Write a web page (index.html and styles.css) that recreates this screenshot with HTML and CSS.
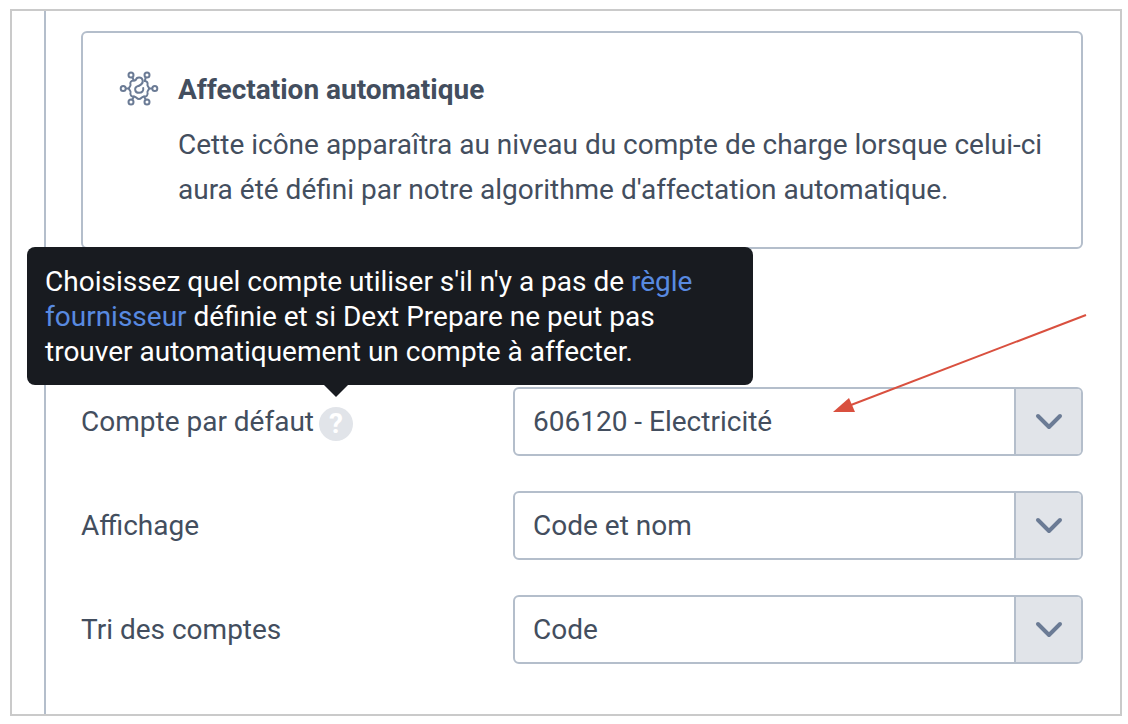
FILE: index.html
```html
<!DOCTYPE html>
<html lang="fr">
<head>
    <meta charset="UTF-8">
    <meta name="viewport" content="width=device-width, initial-scale=1.0">
    <title>Compte par défaut</title>
    <link rel="stylesheet" href="styles.css">
</head>
<body>
    <div class="frame">
        <main class="panel">
            <section class="card">
                <svg class="card-icon" viewBox="0 0 40 36" aria-hidden="true">
                    <circle cx="12" cy="4" r="2.5"/>
                    <circle cx="28" cy="4" r="2.5"/>
                    <circle cx="4.2" cy="17.5" r="2.5"/>
                    <circle cx="35.8" cy="17.5" r="2.5"/>
                    <circle cx="12" cy="31" r="2.5"/>
                    <circle cx="28" cy="31" r="2.5"/>
                    <path d="M7 17.5H10M30 17.5H33M13.3 6.5L15 9.5M13.3 28.5L15 25.5M26.7 28.5L25 25.5M26.7 6.5L25.8 10"/>
                    <path d="M19.5 15C22 14 24 12 23.7 9.5C23 5.5 17.5 5.5 16.8 9C16 10 15.5 9.5 14.5 9.5C12 9.5 10.8 11.5 11.5 13.5C12 15.5 10 15.5 10 17.5C10 19.5 12 19.5 11.5 21.5C10.8 24 12.5 26 15 25.5C17.5 25.5 17.5 28 20 28C22.5 28 22.5 25.5 25 25.5C27.5 26 29.2 24 28.5 21.5C28 19.5 30 19.5 30 17.5C30 15.5 28 15.5 28.5 13.5C29 11.5 28 10.2 25.8 10"/>
                    <path d="M19.5 15C14.5 16 15.5 21.8 20 21.8C23 21.8 24.8 20 24.2 17"/>
                </svg>
                <div>
                    <h2>Affectation automatique</h2>
                    <p>Cette icône apparaîtra au niveau du compte de charge lorsque celui-ci aura été défini par notre algorithme d'affectation automatique.</p>
                </div>
            </section>

            <form class="settings">
                <div class="row">
                    <div class="label">
                        <label for="compte">Compte par défaut</label>
                        <div class="help">
                            <button type="button" class="help-btn" aria-label="Aide" aria-describedby="aide">?</button>
                            <div class="tooltip" id="aide" role="tooltip">Choisissez quel compte utiliser s'il n'y a pas de <a href="#">règle fournisseur</a> définie et si Dext Prepare ne peut pas trouver automatiquement un compte à affecter.</div>
                        </div>
                    </div>
                    <div class="select">
                        <select id="compte">
                            <option>606120 - Electricité</option>
                        </select>
                        <span class="toggle"><svg viewBox="0 0 28 18"><path d="M3 3L14 14L25 3"/></svg></span>
                        <svg class="arrow" viewBox="0 0 254 100" aria-hidden="true">
                            <path class="arrow-line" d="M253 1L18 91"/>
                            <path class="arrow-head" d="M0 98L16 84L22 98Z"/>
                        </svg>
                    </div>
                </div>
                <div class="row">
                    <label class="label" for="affichage">Affichage</label>
                    <div class="select">
                        <select id="affichage">
                            <option>Code et nom</option>
                        </select>
                        <span class="toggle"><svg viewBox="0 0 28 18"><path d="M3 3L14 14L25 3"/></svg></span>
                    </div>
                </div>
                <div class="row">
                    <label class="label" for="tri">Tri des comptes</label>
                    <div class="select">
                        <select id="tri">
                            <option>Code</option>
                        </select>
                        <span class="toggle"><svg viewBox="0 0 28 18"><path d="M3 3L14 14L25 3"/></svg></span>
                    </div>
                </div>
            </form>
        </main>
    </div>
</body>
</html>
```
FILE: styles.css
```css
*{
    box-sizing: border-box;
}
body{
    margin: 0;
    padding: 9px 6px 9px 10px;
    background-color: #fff;
    color: #434e5e;
    font-family: Roboto, "Liberation Sans", sans-serif;
    font-size: 28px;
}
.frame{
    border: 2px solid #cacaca;
    padding-left: 32px;
}
.panel{
    border-left: 2px solid #b4becb;
    padding: 20px 37px 50px 35px;
}

/* encadré */
.card{
    display: flex;
    gap: 19px;
    border: 2px solid #b4becb;
    border-radius: 6px;
    padding: 34px 36px 35px;
}
.card-icon{
    flex: none;
    width: 40px;
    height: 36px;
    margin-top: 4px;
    fill: none;
    stroke: #6b7b95;
    stroke-width: 2;
    stroke-linecap: round;
}
.card h2{
    margin: 0 0 10px;
    font-size: 28px;
    line-height: 45px;
    font-weight: 700;
}
.card p{
    margin: 0;
    line-height: 45px;
}

/* formulaire */
.settings{
    display: grid;
    gap: 35px;
    margin-top: 138px;
}
.row{
    display: grid;
    grid-template-columns: 432px 1fr;
    align-items: center;
}
.label{
    display: flex;
    align-items: center;
    gap: 5px;
}
.select{
    position: relative;
    display: flex;
    height: 69px;
    border: 2px solid #b4becb;
    border-radius: 6px;
    background-color: #fff;
}
.select select{
    flex: 1;
    min-width: 0;
    appearance: none;
    border: 0;
    padding: 0 18px;
    background: none;
    color: inherit;
    font: inherit;
}
.toggle{
    display: flex;
    align-items: center;
    justify-content: center;
    width: 67px;
    border-left: 2px solid #b4becb;
    border-radius: 0 4px 4px 0;
    background-color: #e1e4e9;
    pointer-events: none;
}
.toggle svg{
    width: 28px;
    height: 18px;
    fill: none;
    stroke: #6b7b95;
    stroke-width: 4;
    stroke-linecap: round;
    stroke-linejoin: round;
}

/* aide */
.help{
    position: relative;
    height: 34px;
    margin-top: 4px;
}
.help-btn{
    display: block;
    width: 34px;
    height: 34px;
    border: 0;
    border-radius: 50%;
    padding: 0;
    background-color: #e1e4e9;
    color: #fff;
    font: 700 28px/34px Roboto, sans-serif;
}
.tooltip{
    position: absolute;
    z-index: 1;
    left: -292px;
    bottom: 56px;
    width: 726px;
    padding: 17px 18px 16px;
    border-radius: 8px;
    background-color: #181b20;
    color: #fff;
    line-height: 35px;
}
.tooltip::after{
    content: "";
    position: absolute;
    top: 100%;
    left: 297px;
    border: 12px solid transparent;
    border-top-color: #181b20;
    border-bottom: 0;
}
.tooltip a{
    color: #588ae0;
    text-decoration: none;
}

.arrow{
    position: absolute;
    right: -6px;
    bottom: 40px;
    width: 254px;
    height: 100px;
    pointer-events: none;
}
.arrow-line{
    stroke: #d9503f;
    stroke-width: 2;
}
.arrow-head{
    fill: #d9503f;
}
```
